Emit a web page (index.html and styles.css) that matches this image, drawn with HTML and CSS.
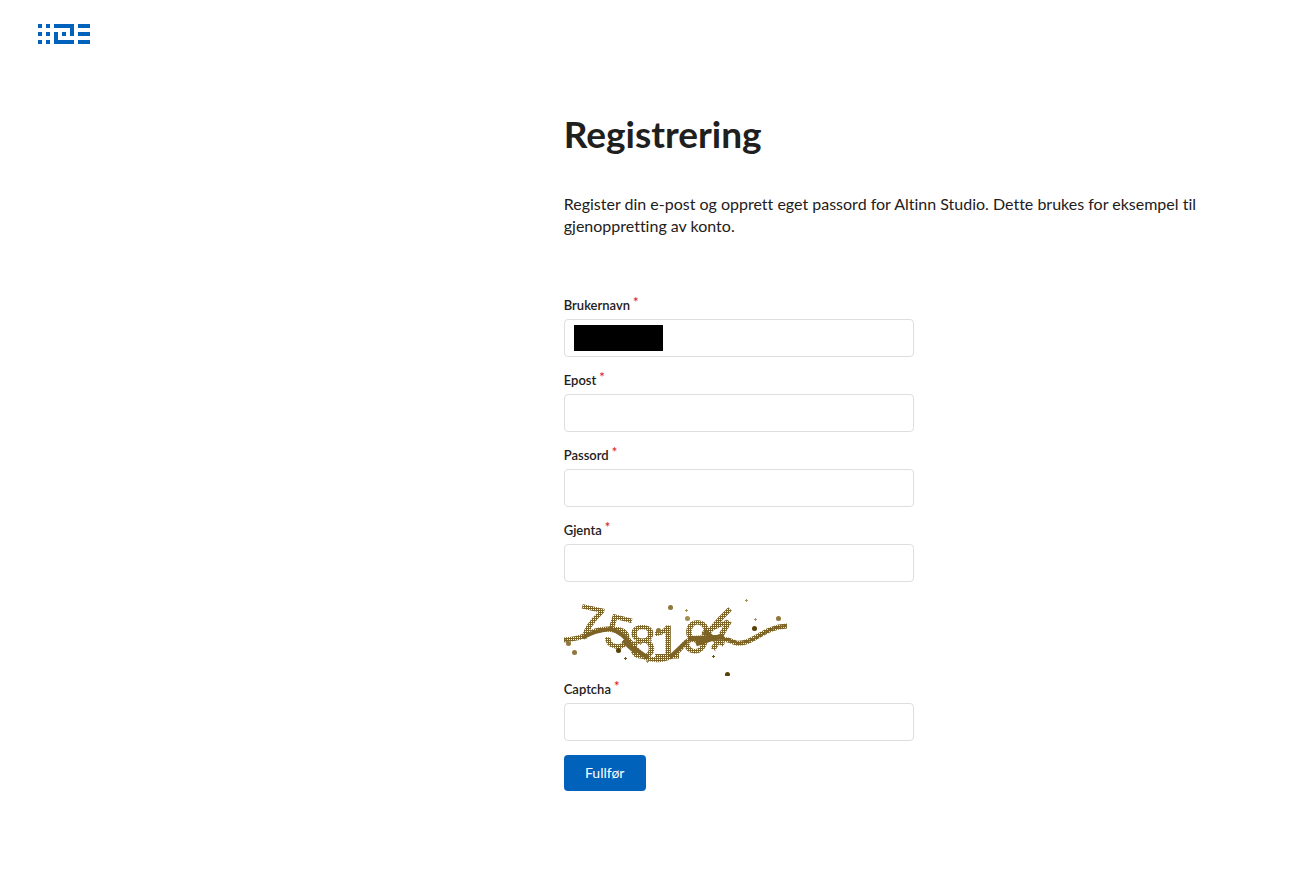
FILE: index.html
```html
<!DOCTYPE html>
<html lang="nb">
<head>
<meta charset="utf-8">
<meta name="viewport" content="width=device-width, initial-scale=1">
<title>Registrering</title>
<link rel="stylesheet" href="styles.css">
</head>
<body>
<header class="topbar">
  <a class="logo-link" href="#" aria-label="Altinn Studio">
    <svg class="logo" viewBox="0 0 52 20" width="52" height="20" aria-hidden="true">
      <path d="M0 0h4v4H0zM8 0h4v4H8zM0 8h4v4H0zM8 8h4v4H8zM0 16h4v4H0zM8 16h4v4H8zM16 0h20v12h-4V4H16zM16 8h4v8h16v4H16zM24 8h4v4h-4zM40 0h12v4H40zM40 8h12v4H40zM40 16h12v4H40z"/>
    </svg>
  </a>
</header>
<main class="page">
  <h1 class="title">Registrering</h1>
  <p class="intro">Register din e-post og opprett eget passord for Altinn Studio. Dette brukes for eksempel til gjenoppretting av konto.</p>
  <form class="form">
    <div class="field">
      <label class="label required" for="username">Brukernavn</label>
      <div class="control">
        <input class="input" id="username" type="text" required>
        <span class="redacted"></span>
      </div>
    </div>
    <div class="field">
      <label class="label required" for="email">Epost</label>
      <input class="input" id="email" type="email" required>
    </div>
    <div class="field">
      <label class="label required" for="password">Passord</label>
      <input class="input" id="password" type="password" required>
    </div>
    <div class="field">
      <label class="label required" for="retype">Gjenta</label>
      <input class="input" id="retype" type="password" required>
    </div>
    <svg class="captcha" viewBox="0 0 240 80" width="240" height="80" role="img" aria-label="Captcha">
      <defs>
        <pattern id="mesh" width="2" height="2" patternUnits="userSpaceOnUse">
          <path d="M0 0h2v1H1v1H0z" fill="#7d6426" shape-rendering="crispEdges"/>
        </pattern>
        <mask id="digits" maskUnits="userSpaceOnUse" x="0" y="0" width="240" height="80">
          <g class="captcha-digits">
            <text transform="translate(9 39) rotate(12)">7</text>
            <text transform="translate(37 48) rotate(14)">5</text>
            <text transform="translate(64 62)">8</text>
            <text transform="translate(88 62)">1</text>
            <text transform="translate(116 54) rotate(10)">9</text>
            <text transform="translate(132 43) rotate(30)">4</text>
          </g>
        </mask>
      </defs>
      <rect width="240" height="80" fill="url(#mesh)" mask="url(#digits)"/>
      <g fill="none" stroke-linejoin="round">
        <path stroke="url(#mesh)" stroke-width="5" d="M0 44Q12 43 20 40Q34 32 46 33C62 34 68 52 80 61Q94 67 108 60C118 54 120 42 134 42S160 41 172 47C190 49 198 31 223 30"/>
        <path stroke="#7d6426" stroke-width="4" d="M19 42Q28 35 47 33Q60 37 67 50M70 52L84 62M106 61Q115 53 123 45"/>
        <path stroke="#7d6426" stroke-width="2" d="M0 44L4 45M152 41Q163 43 174 47Q187 46 199 38Q210 30 223 30"/>
        <path stroke="#7d6426" stroke-width="5" d="M60 44Q65 51 73 56M125 43L160 41M140 35L151 44M132 48L150 42"/>
        <path stroke="url(#mesh)" stroke-width="5" d="M166 13L157 22L141 40"/>
      </g>
      <g fill="#8f783d">
        <circle cx="106.500" cy="11.500" r="2.500"/><circle cx="4.500" cy="47.500" r="2.500"/>
        <circle cx="10.500" cy="56.500" r="2.500"/><circle cx="94.500" cy="34.500" r="2.500"/>
        <circle cx="214.500" cy="22.500" r="2.500"/>
        <circle cx="123.500" cy="22.500" r="2.500" fill="#a28c50"/>
      </g>
      <g fill="#5a3f06">
        <circle cx="54.500" cy="54.500" r="2.500"/><circle cx="190.500" cy="32.500" r="2.500"/><circle cx="163.500" cy="78.500" r="2.500"/>
      </g>
      <path d="M181 4.500h3M182.500 3v3M190 23.500h3M191.500 22v3M121 14.500h3M122.500 13v3M75 47.500h3M76.500 46v3M85 44.500h3M86.500 43v3M82 65.500h3M83.500 64v3" stroke="#ab9558"/>
      <path d="M148 60.500h3M149.500 59v3M60 62.500h3M61.500 61v3" stroke="#6d5318"/>
    </svg>
    <div class="field">
      <label class="label required" for="captcha">Captcha</label>
      <input class="input" id="captcha" type="text" autocomplete="off" required>
    </div>
    <button class="submit" type="submit">Fullfør</button>
  </form>
</main>
</body>
</html>
```
FILE: styles.css
```css
* {
  box-sizing: border-box;
}

body {
  margin: 0;
  background: #fff;
  color: #1e2020;
  font-family: Lato, "Liberation Sans", sans-serif;
  font-size: 14px;
  font-variant-ligatures: none;
}

.topbar {
  padding: 24px 38px;
}

.logo-link,
.logo {
  display: block;
  width: 52px;
}

.logo {
  fill: #0062ba;
}

.page {
  padding: 43px 104px 48px 43%;
}

.title {
  margin: 0 0 36px;
  font-size: 37px;
  font-weight: 700;
  line-height: 46px;
}

.intro {
  margin: 0 0 59px;
  font-size: 16px;
  line-height: 22px;
}

.form {
  max-width: 350px;
}

.field {
  margin-bottom: 14px;
}

.label {
  display: block;
  margin-bottom: 4px;
  font-size: 13px;
  font-weight: 600;
  line-height: 19px;
}

.required::after {
  content: "*";
  display: inline-block;
  margin: -3px 0 0 3px;
  color: #db2828;
  vertical-align: top;
}

.control {
  position: relative;
}

.input {
  display: block;
  width: 100%;
  height: 38px;
  padding: 8px 14px;
  border: 1px solid #dededf;
  border-radius: 4px;
  background: #fff;
  color: inherit;
  font: inherit;
}

.redacted {
  position: absolute;
  top: 6px;
  left: 10px;
  width: 89px;
  height: 26px;
  background: #000;
}

.captcha {
  display: block;
  margin-bottom: 4px;
}

.captcha-digits {
  fill: #fff;
  stroke: #fff;
  stroke-width: 1;
  font-family: "Liberation Mono", monospace;
  font-size: 48px;
}

.submit {
  display: block;
  min-width: 82px;
  height: 36px;
  padding: 0 20px 2px;
  border: 0;
  border-radius: 4px;
  background: #0062ba;
  color: #fff;
  font: inherit;
}
```
